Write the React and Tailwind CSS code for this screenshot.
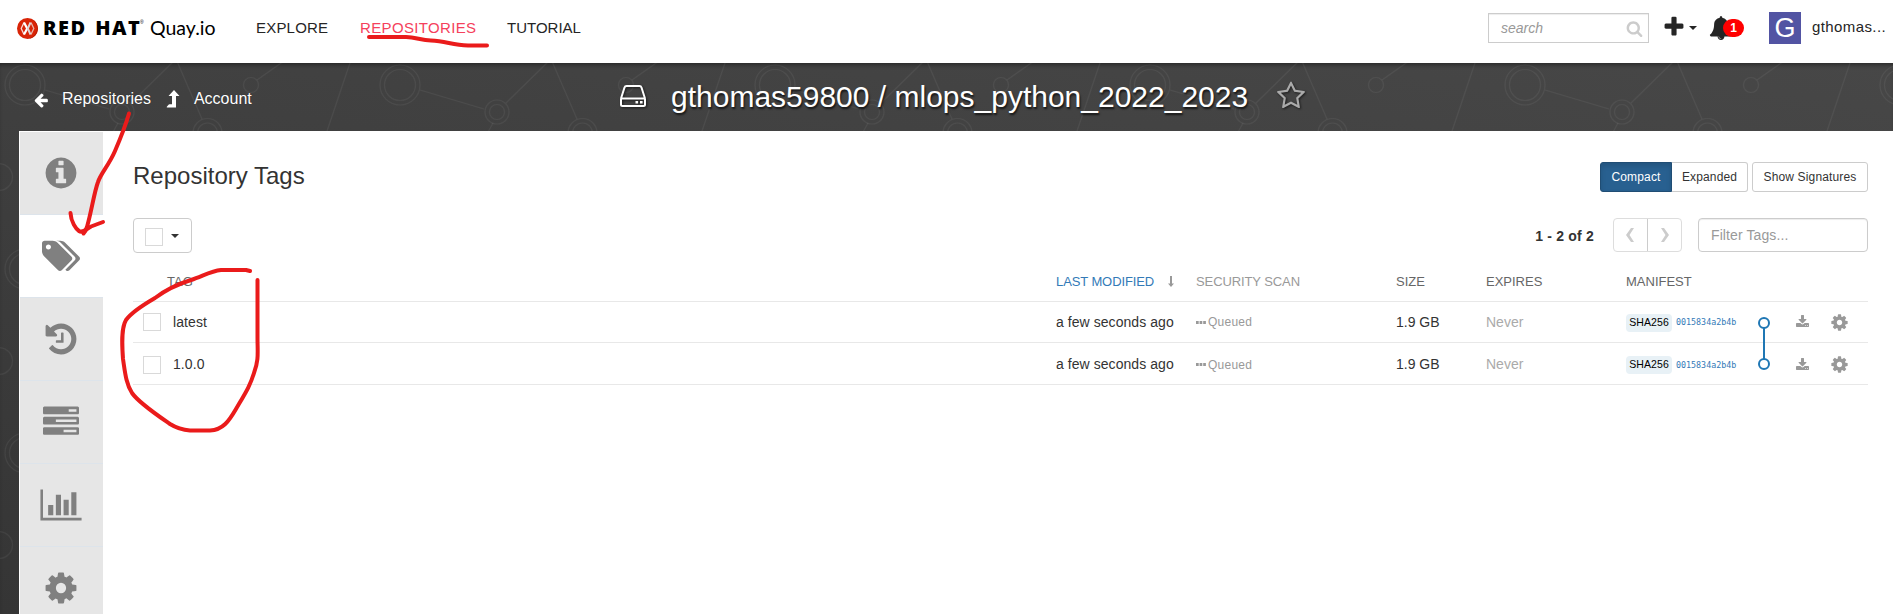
const PATHS = {
  info: "M1152 1376v-160q0-14-9-23t-23-9h-96v-512q0-14-9-23t-23-9h-320q-14 0-23 9t-9 23v160q0 14 9 23t23 9h96v320h-96q-14 0-23 9t-9 23v160q0 14 9 23t23 9h448q14 0 23-9t9-23zm-128-896v-160q0-14-9-23t-23-9h-192q-14 0-23 9t-9 23v160q0 14 9 23t23 9h192q14 0 23-9t9-23zm640 416q0 209-103 385.5t-279.5 279.5-385.5 103-385.5-103-279.5-279.5-103-385.5 103-385.5 279.5-279.5 385.5-103 385.5 103 279.5 279.5 103 385.5z",
  tags: "M448 448q0-53-37.5-90.5t-90.5-37.5-90.5 37.5-37.5 90.5 37.5 90.5 90.5 37.5 90.5-37.5 37.5-90.5zm1067 576q0 53-37 90l-491 492q-39 37-91 37-53 0-90-37l-715-716q-38-37-64.5-101t-26.5-117v-416q0-52 38-90t90-38h416q53 0 117 26.5t102 64.5l715 714q37 39 37 91zm384 0q0 53-37 90l-491 492q-39 37-91 37-36 0-59-14t-53-45l470-470q37-37 37-90 0-52-37-91l-715-714q-38-38-102-64.5t-117-26.5h224q53 0 117 26.5t102 64.5l715 714q37 39 37 91z",
  history: "M1664 896q0 156-61 298t-164 245-245 164-298 61q-172 0-327-72.5t-264-204.5q-7-10-6.5-22.5t8.5-20.5l137-138q10-9 25-9 16 2 23 12 73 95 179 147t225 52q104 0 198.5-40.5t163.5-109.5 109.5-163.5 40.5-198.5-40.5-198.5-109.5-163.5-163.5-109.5-198.5-40.5q-98 0-188 35.5t-160 101.5l137 138q31 30 14 69-17 40-59 40h-448q-26 0-45-19t-19-45v-448q0-42 40-59 39-17 69 14l130 129q107-101 244.5-156.5t284.5-55.5q156 0 298 61t245 164 164 245 61 298zm-640-288v448q0 14-9 23t-23 9h-320q-14 0-23-9t-9-23v-64q0-14 9-23t23-9h224v-352q0-14 9-23t23-9h64q14 0 23 9t9 23z",
  tasks: "M1024 1408h640v-128h-640v128zm-384-512h1024v-128h-1024v128zm640-512h384v-128h-384v128zm512 832v256q0 26-19 45t-45 19h-1664q-26 0-45-19t-19-45v-256q0-26 19-45t45-19h1664q26 0 45 19t19 45zm0-512v256q0 26-19 45t-45 19h-1664q-26 0-45-19t-19-45v-256q0-26 19-45t45-19h1664q26 0 45 19t19 45zm0-512v256q0 26-19 45t-45 19h-1664q-26 0-45-19t-19-45v-256q0-26 19-45t45-19h1664q26 0 45 19t19 45z",
  chart: "M640 896v512h-256v-512h256zm384-512v1024h-256v-1024h256zm1024 1152v128h-2048v-1536h128v1408h1920zm-640-896v768h-256v-768h256zm384-384v1152h-256v-1152h256z",
  cog: "M1152 896q0-106-75-181t-181-75-181 75-75 181 75 181 181 75 181-75 75-181zm512-109v222q0 12-8 23t-20 13l-185 28q-19 54-39 91 35 50 107 138 10 12 10 25t-9 23q-27 37-99 108t-94 71q-12 0-26-9l-138-108q-44 23-91 38-16 136-29 186-7 28-36 28h-222q-14 0-24.5-8.5t-11.5-21.5l-28-184q-49-16-90-37l-141 107q-10 9-25 9-14 0-25-11-126-114-165-168-7-10-7-23 0-12 8-23 15-21 51-66.5t54-70.5q-27-50-41-99l-183-27q-13-2-21-12.5t-8-23.5v-222q0-12 8-23t19-13l186-28q14-46 39-92-40-57-107-138-10-12-10-24 0-10 9-23 26-36 98.5-107.5t94.5-71.5q13 0 26 10l138 107q44-23 91-38 16-136 29-186 7-28 36-28h222q14 0 24.5 8.5t11.5 21.5l28 184q49 16 90 37l142-107q9-9 24-9 13 0 25 10 129 119 165 170 7 8 7 22 0 12-8 23-15 21-51 66.5t-54 70.5q26 50 41 98l183 28q13 2 21 12.5t8 23.5z",
  download: "M1344 1344q0-26-19-45t-45-19-45 19-19 45 19 45 45 19 45-19 19-45zm256 0q0-26-19-45t-45-19-45 19-19 45 19 45 45 19 45-19 19-45zm128-224v320q0 40-28 68t-68 28h-1472q-40 0-68-28t-28-68v-320q0-40 28-68t68-28h465l135 136q58 56 136 56t136-56l136-136h464q40 0 68 28t28 68zm-325-569q17 41-14 70l-448 448q-18 19-45 19t-45-19l-448-448q-31-29-14-70 17-39 59-39h256v-448q0-26 19-45t45-19h256q26 0 45 19t19 45v448h256q42 0 59 39z",
  star: "M1201 1004l306-297-422-62-189-382-189 382-422 62 306 297-73 421 378-199 377 199zm527-357q0 22-26 48l-363 354 86 500q1 7 1 20 0 50-41 50-19 0-40-12l-449-236-449 236q-22 12-40 12-21 0-31.5-14.5t-10.5-35.5q0-6 2-20l86-500-364-354q-25-27-25-48 0-37 56-46l502-73 225-455q19-41 49-41t49 41l225 455 502 73q56 9 56 46z",
  search: "M1216 832q0-185-131.5-316.5t-316.5-131.5-316.5 131.5-131.5 316.5 131.5 316.5 316.5 131.5 316.5-131.5 131.5-316.5zm512 832q0 52-38 90t-90 38q-54 0-90-38l-343-342q-179 124-399 124-143 0-273.5-55.5t-225-150-150-225-55.5-273.5 55.5-273.5 150-225 225-150 273.5-55.5 273.5 55.5 225 150 150 225 55.5 273.5q0 220-124 399l343 343q37 37 37 90z",
  plus: "M1600 736v192q0 40-28 68t-68 28h-416v416q0 40-28 68t-68 28h-192q-40 0-68-28t-28-68v-416h-416q-40 0-68-28t-28-68v-192q0-40 28-68t68-28h416v-416q0-40 28-68t68-28h192q40 0 68 28t28 68v416h416q40 0 68 28t28 68z",
  bell: "M912 1696q0-16-16-16-59 0-101.5-42.5t-42.5-101.5q0-16-16-16t-16 16q0 73 51.5 124.5t124.5 51.5q16 0 16-16zm816-288q0 52-38 90t-90 38h-448q0 106-75 181t-181 75-181-75-75-181h-448q-52 0-90-38t-38-90q50-42 91-88t85-119.5 74.5-158.5 50-206 19.5-260q0-152 117-282.5t307-158.5q-8-19-8-39 0-40 28-68t68-28 68 28 28 68q0 20-8 39 190 28 307 158.5t117 282.5q0 139 19.5 260t50 206 74.5 158.5 85 119.5 91 88z",
  left: "M1664 896v128q0 53-32.5 90.5t-84.5 37.5h-704l293 294q38 36 38 90t-38 90l-75 76q-37 37-90 37-52 0-91-37l-651-652q-37-37-37-90 0-52 37-91l651-650q38-38 91-38 52 0 90 38l75 74q38 38 38 91t-38 91l-293 293h704q52 0 84.5 37.5t32.5 90.5z",
};

function Icon({ name, box = "0 0 1792 1792", className }) {
  return (
    <svg viewBox={box} fill="currentColor" className={`shrink-0 ${className}`}>
      <path d={PATHS[name]} />
    </svg>
  );
}

function Network() {
  return (
    <svg className="absolute inset-0 h-full w-full" fill="none">
      <defs>
        <pattern id="net" width="375" height="184" patternUnits="userSpaceOnUse" y="-63">
          <g stroke="#ffffff" strokeOpacity="0.055" fill="none" strokeWidth="1.2">
            <circle cx="25" cy="85" r="20" />
            <circle cx="25" cy="85" r="15.5" />
            <path d="M45 90L109 109M131 103L176 59M176 59L202 119M118 123L112 134M257 80L284 61M351 60L326 134" />
            <circle cx="122" cy="112" r="12" />
            <circle cx="122" cy="112" r="7.5" />
            <circle cx="207.5" cy="133" r="14.5" />
            <circle cx="207.5" cy="133" r="10" />
            <circle cx="251" cy="85" r="7.5" />
            <circle cx="-1" cy="177" r="13.5" />
            <circle cx="374" cy="177" r="13.5" />
            <circle cx="-1" cy="-7" r="13.5" />
            <circle cx="374" cy="-7" r="13.5" />
          </g>
        </pattern>
      </defs>
      <rect width="100%" height="100%" fill="url(#net)" />
    </svg>
  );
}

function Logo() {
  return (
    <div className="flex h-[56px] w-[239px] items-center pl-[17px] text-black">
      <svg className="size-[21px] shrink-0" viewBox="0 0 21 21" fill="none">
        <circle cx="10.5" cy="10.5" r="10.5" fill="#d92407" />
        <path d="M14.500 1A10.300 10.300 0 0 1 9 20.700A10.500 10.500 0 0 0 14.500 1z" fill="#b81c04" />
        <path d="M7 4.500L4.200 10.500L7 16.500" stroke="#f7d9d2" strokeWidth="1.300" />
        <path d="M14 4.500L16.800 10.500L14 16.500" stroke="#e8b5ab" strokeWidth="1.300" />
        <path d="M7 4.500L10.200 10.500L7 16.500" stroke="#ffffff" strokeWidth="2.200" />
        <path d="M13.500 4.500L10.800 10.500L13.500 16.500" stroke="#ddd6d6" strokeWidth="2" />
      </svg>
      <span className="ml-[5px] w-[97px] font-['Open_Sans',sans-serif] text-[20px] leading-none font-extrabold tracking-[1.450px] whitespace-nowrap [word-spacing:2px]">RED HAT</span>
      <span className="-mt-3 w-[5px] font-['Liberation_Sans',sans-serif] text-[5px] leading-none">®</span>
      <span className="ml-[5px] font-['Lato',sans-serif] text-[19.500px] leading-none whitespace-nowrap">Quay.io</span>
    </div>
  );
}

function Caret({ className }) {
  return <span className={`h-0 w-0 border-x-4 border-t-4 border-x-transparent ${className}`} />;
}

function Header() {
  return (
    <header className="flex h-[63px] items-start bg-white">
      <Logo />
      <nav className="flex h-[56px] items-center pt-px text-[15px] whitespace-nowrap text-[#252525]">
        <a className="w-[104px] pl-[17px] tracking-[0.2px]">EXPLORE</a>
        <a className="w-[147px] pl-[17px] tracking-[0.35px] text-[#f5415c]">REPOSITORIES</a>
        <a className="pl-[17px]">TUTORIAL</a>
      </nav>
      <div className="ml-auto flex h-[56px] items-center text-[#252525]">
        <div className="flex h-[30px] w-[161px] items-center justify-between border border-[#ccc] pr-[5px] pl-3 text-[14px] text-[#999] italic shadow-[inset_0_1px_1px_rgba(0,0,0,0.075)]">
          search
          <Icon name="search" className="size-[17px] text-[#ccc]" />
        </div>
        <Icon name="plus" className="mt-[-2px] ml-[13px] size-[24px]" />
        <Caret className="ml-[3px] border-t-[#252525]" />
        <div className="relative mt-[-1px] ml-[12px] flex w-[60px] items-center">
          <Icon name="bell" className="size-[24px]" />
          <span className="absolute top-[3px] left-[14px] flex h-[18px] w-[21px] items-center justify-center rounded-full bg-[#f00] text-[12px] font-bold text-white">1</span>
        </div>
        <div className="flex size-8 items-center justify-center bg-[#5254a3] text-[27px] leading-none text-white">G</div>
        <span className="mt-[-2px] ml-[11px] w-[81px] text-[15px] tracking-[0.400px]">gthomas...</span>
      </div>
    </header>
  );
}

function TitleBar() {
  return (
    <div className="relative flex h-[68px] items-start text-white">
      <div className="flex h-[68px] w-[620px] items-center pt-[3px] pl-[33px] text-[16px] [text-shadow:0_0_1px_rgba(0,0,0,0.4)]">
        <Icon name="left" className="mt-[2px] size-[16px]" />
        <span className="ml-[13px]">Repositories</span>
        <svg viewBox="0 0 14 18" fill="currentColor" className="ml-[15px] h-[18px] w-[14px]">
          <path d="M8 0l5.500 6h-3.500v11.500H1.200q-.9 0-.4-.7L2.800 14.500q.3-.3.700-.3H6V6H2.500z" />
        </svg>
        <span className="ml-[14px]">Account</span>
      </div>
      <svg viewBox="0 0 26 22" fill="none" stroke="currentColor" strokeWidth="2" className="mt-[22px] h-[22px] w-[26px] shrink-0 drop-shadow-[1px_1px_1px_rgba(0,0,0,0.6)]">
        <path d="M1 13.500L4.500 2.500Q5 1 6.500 1h13Q21 1 21.500 2.500L25 13.500M1 13.500v6Q1 21 2.500 21h21Q25 21 25 19.500v-6z" strokeLinejoin="round" />
        <path d="M15.500 17.300h2.600M20 17.300h2.600" strokeWidth="2.600" />
      </svg>
      <h1 className="mt-[16px] ml-[25px] text-[30px] leading-[36px] whitespace-nowrap [text-shadow:1px_2px_2px_rgba(0,0,0,0.7)]">gthomas59800 / mlops_python_2022_2023</h1>
      <Icon name="star" className="mt-[18px] ml-[28px] size-[30px] text-[#aaa] drop-shadow-[1px_1px_1px_rgba(0,0,0,0.6)]" />
    </div>
  );
}

const TABS = [
  { name: "info", cls: "size-[36px]" },
  { name: "tags", cls: "h-[36px] w-[38px]", box: "0 0 1900 1792", active: true },
  { name: "history", cls: "size-[36px]" },
  { name: "tasks", cls: "size-[36px]" },
  { name: "chart", cls: "h-[36px] w-[42px]", box: "0 0 2048 1792" },
  { name: "cog", cls: "size-[36px]" },
];

function Sidebar() {
  return (
    <aside className="flex w-[84px] shrink-0 flex-col border-t border-l border-white">
      {TABS.map((t) => (
        <div key={t.name} className={`flex h-[83px] shrink-0 items-center justify-center border-b border-[#dde4eb] pr-[2px] pb-px text-[#808080] ${t.active ? "bg-white" : "bg-[#e6e6e6]"}`}>
          <Icon name={t.name} box={t.box} className={t.cls} />
        </div>
      ))}
    </aside>
  );
}

function CheckBox() {
  return <span className="size-[18px] shrink-0 border border-[#d9d9d9] bg-white" />;
}

function Toolbar() {
  return (
    <>
      <div className="flex items-start justify-between pt-[31px]">
        <h2 className="text-[24px] leading-[28px] text-[#333]">Repository Tags</h2>
        <div className="flex text-[12px] tracking-[0.15px] text-[#333]">
          <span className="flex h-[30px] w-[72px] items-center justify-center rounded-l-[3px] border border-[#204d74] bg-[#286090] text-white shadow-[inset_0_3px_5px_rgba(0,0,0,0.125)]">Compact</span>
          <span className="flex h-[30px] w-[76px] items-center justify-center rounded-r-[3px] border border-l-0 border-[#ccc]">Expanded</span>
          <span className="ml-1 flex h-[30px] w-[116px] items-center justify-center rounded-[3px] border border-[#ccc]">Show Signatures</span>
        </div>
      </div>
      <div className="mt-[26px] flex h-[35px] items-start">
        <div className="flex h-[35px] w-[59px] items-center rounded border border-[#ccc] pt-[3px] pl-[11px]">
          <CheckBox />
          <Caret className="mb-[2px] ml-[8px] border-t-[#333]" />
        </div>
        <span className="mt-[9px] mr-[19px] ml-auto text-[14px] leading-[18px] font-bold tracking-[0.2px] text-[#333]">1 - 2 of 2</span>
        <div className="flex h-[34px] w-[69px] rounded border border-[#ddd]">
          <div className="flex w-[34px] items-center justify-center border-r border-[#ccc] pr-px pb-px">
            <svg className="h-[14px] w-[8px]" viewBox="0 0 8 14" fill="#ccc"><path d="M5 0h3L3.500 7L8 14H5L0 7z" /></svg>
          </div>
          <div className="flex flex-1 items-center justify-center pb-px">
            <svg className="h-[14px] w-[8px]" viewBox="0 0 8 14" fill="#ccc"><path d="M3 0H0L4.500 7L0 14H3L8 7z" /></svg>
          </div>
        </div>
        <div className="ml-4 flex h-[34px] w-[170px] items-center rounded border border-[#ccc] pl-3 text-[14px] tracking-[0.1px] text-[#999] shadow-[inset_0_1px_1px_rgba(0,0,0,0.075)]">Filter Tags...</div>
      </div>
    </>
  );
}

const COLS = "grid grid-cols-[923px_140px_200px_90px_140px_125px_1fr] items-center border-b border-[#e8e8e8]";

function Row({ tag, className }) {
  return (
    <div className={`${COLS} ${className} text-[14px] text-[#333]`}>
      <div className="flex items-center pl-[10px]">
        <CheckBox />
        <span className="ml-3 tracking-[0.08px]">{tag}</span>
      </div>
      <span className="tracking-[0.06px]">a few seconds ago</span>
      <span className="flex items-center text-[12px] tracking-[0.25px] text-[#999]">
        <svg className="mr-[2px] h-[3px] w-[10px]" viewBox="0 0 10 3" fill="#999"><path d="M0 0h2.700v3H0zM3.600 0h2.700v3H3.600zM7.200 0h2.700v3H7.200z" /></svg>
        Queued
      </span>
      <span>1.9 GB</span>
      <span className="text-[#aaa]">Never</span>
      <div className="flex items-center pt-px">
        <span className="flex h-[18px] w-[46px] items-center justify-center rounded-[4px] bg-[#e8f1f6] text-[10.500px] tracking-[0.1px] text-black">SHA256</span>
        <span className="ml-1 font-['DejaVu_Sans_Mono',monospace] text-[8.350px] text-[#337ab7]">0015834a2b4b</span>
      </div>
      <div className="flex items-center pl-[44px] text-[#999]">
        <Icon name="download" className="h-[14px] w-[15px]" />
        <Icon name="cog" className="ml-[20px] size-[19px]" />
      </div>
    </div>
  );
}

function TagTable() {
  return (
    <div className="relative mt-[14px]">
      <div className={`${COLS} h-[35px] pb-[5px] text-[13px] whitespace-nowrap text-[#666]`}>
        <span className="pl-[34px]">TAG</span>
        <span className="flex items-center tracking-[-0.1px] text-[#337ab7]">
          LAST MODIFIED
          <svg className="ml-[14px] h-[11px] w-[6px]" viewBox="0 0 6 11" fill="#999"><path d="M2 0h2v7.500h2L3 11L0 7.500h2z" /></svg>
        </span>
        <span className="tracking-[-0.1px] text-[#999]">SECURITY SCAN</span>
        <span>SIZE</span>
        <span>EXPIRES</span>
        <span>MANIFEST</span>
      </div>
      <Row tag="latest" className="h-[41px]" />
      <Row tag="1.0.0" className="h-[42px] pt-[2px]" />
      <svg className="absolute top-[49px] left-[1624px] h-[55px] w-[14px]" viewBox="0 0 14 55" fill="#fff" stroke="#1f77b4" strokeWidth="2">
        <path d="M7 7v41" />
        <circle cx="7" cy="7" r="5" />
        <circle cx="7" cy="48" r="5" />
      </svg>
    </div>
  );
}

function Annotations() {
  return (
    <svg className="pointer-events-none absolute inset-0 h-[614px] w-[600px]" fill="none" stroke="#ea1b1b" strokeWidth="4" strokeLinecap="round" strokeLinejoin="round">
      <path d="M369 37H406C416 37 421 40.500 431 40.500C446 41 452 45 468 45.500H487" />
      <path d="M129 113.500C126 124 121 137 115 151C109 165 101 173 98 182C94 193 92 209 87 227C86 230 85 232 83.500 233.500" />
      <path d="M70.500 213C71 222 76 229 79 231C82 233 86 230 91 226.500L103 222" />
      <path d="M250 271L246 270H221C211 271 203 276 191 280C178 284 167 289 155 298C143 305 131 313 126 320C121 328 122 345 123 359C125 372 126 384 132 393C139 403 157 415 170 424C178 429 183 430 190 430.500H210C223 430 229 421 236 409C246 392 250 386 254 373C259 360 257.500 352 257.500 338V280" />
    </svg>
  );
}

export default function App() {
  return (
    <div className="relative flex h-[614px] w-[1893px] flex-col overflow-hidden font-['Liberation_Sans',Arial,sans-serif]">
      <Header />
      <main className="relative flex h-[551px] flex-col bg-[linear-gradient(190deg,#474747_0%,#404040_38%,#353535_100%)] shadow-[inset_0_4px_4px_-2px_rgba(0,0,0,0.4)]">
        <Network />
        <TitleBar />
        <div className="relative ml-[19px] flex h-[483px] overflow-hidden bg-white">
          <Sidebar />
          <section className="mr-[25px] ml-[30px] flex-1">
            <Toolbar />
            <TagTable />
          </section>
        </div>
      </main>
      <Annotations />
    </div>
  );
}
